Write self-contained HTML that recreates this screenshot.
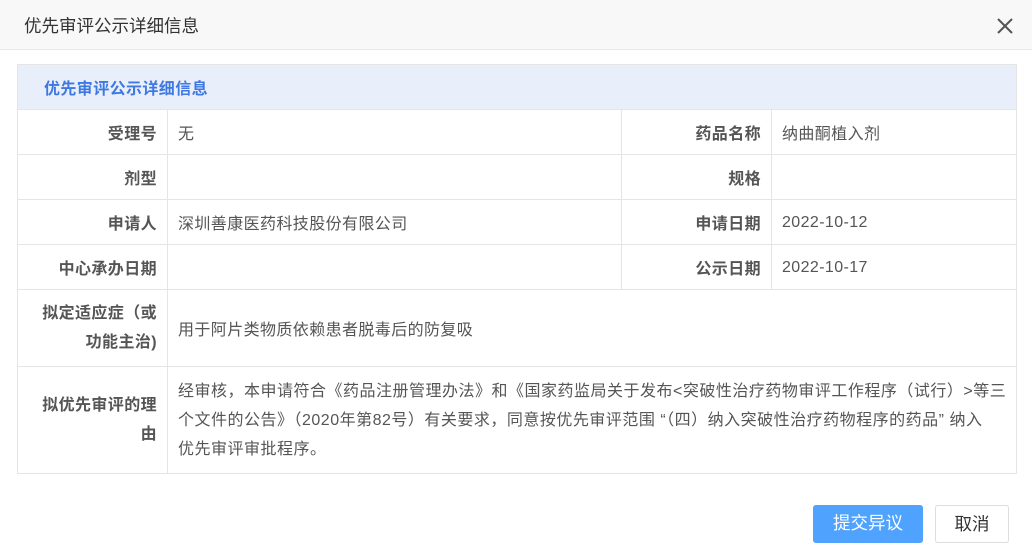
<!DOCTYPE html>
<html><head><meta charset="utf-8"><style>
body{margin:0;width:1032px;height:557px;background:#fff;font-family:"Liberation Sans","Noto Sans CJK SC",sans-serif;position:relative;overflow:hidden;color:#555}
.hd{position:absolute;left:0;top:0;width:1032px;height:50px;background:#f8f8f8;border-bottom:1px solid #e8e8e8;box-sizing:border-box}
.hd span{position:absolute;left:24px;top:13px;font-size:17.5px;color:#333}
.x{position:absolute;left:996px;top:17px}
table{position:absolute;left:17px;top:64px;width:999px;border-collapse:collapse;font-size:16px;letter-spacing:0.4px;table-layout:fixed}
td{border:1px solid #e5e5e5;padding:0 10px;height:44px;color:#555;white-space:nowrap;overflow:hidden}
td.l{text-align:right;font-weight:bold;color:#555}
td.t{background:#e8effb;color:#3f78e0;font-weight:bold;padding-left:26px}
.d{position:relative;top:1px}
.btn{position:absolute;top:505px;height:38px;box-sizing:border-box;border-radius:3px;font-size:17.5px;text-align:center;line-height:36px}
</style></head><body>
<div class="hd"><span>优先审评公示详细信息</span>
<svg class="x" width="18" height="18" viewBox="0 0 18 18"><path d="M2 2L16 16M16 2L2 16" stroke="#555" stroke-width="2"/></svg></div>
<table>
<colgroup><col style="width:150px"><col style="width:454px"><col style="width:150px"><col style="width:245px"></colgroup>
<tr><td class="t" colspan="4" style="height:44px">优先审评公示详细信息</td></tr>
<tr><td class="l">受理号</td><td>无</td><td class="l">药品名称</td><td>纳曲酮植入剂</td></tr>
<tr><td class="l">剂型</td><td></td><td class="l">规格</td><td></td></tr>
<tr><td class="l">申请人</td><td>深圳善康医药科技股份有限公司</td><td class="l">申请日期</td><td><span class="d">2022-10-12</span></td></tr>
<tr><td class="l">中心承办日期</td><td></td><td class="l">公示日期</td><td><span class="d">2022-10-17</span></td></tr>
<tr><td class="l" style="height:76px;line-height:29px">拟定适应症（或<br>功能主治)</td><td colspan="3">用于阿片类物质依赖患者脱毒后的防复吸</td></tr>
<tr><td class="l" style="height:106px;line-height:29px">拟优先审评的理<br>由</td><td colspan="3" style="line-height:29px;letter-spacing:0.5px">经审核，本申请符合《药品注册管理办法》和《国家药监局关于发布&lt;突破性治疗药物审评工作程序（试行）&gt;等三<br>个文件的公告》（2020年第82号）有关要求，同意按优先审评范围 “（四）纳入突破性治疗药物程序的药品” 纳入<br>优先审评审批程序。</td></tr>
</table>
<div class="btn" style="left:813px;width:110px;background:#4fa3ff;color:#fff">提交异议</div>
<div class="btn" style="left:935px;width:74px;border:1px solid #ddd;color:#333">取消</div>
</body></html>
